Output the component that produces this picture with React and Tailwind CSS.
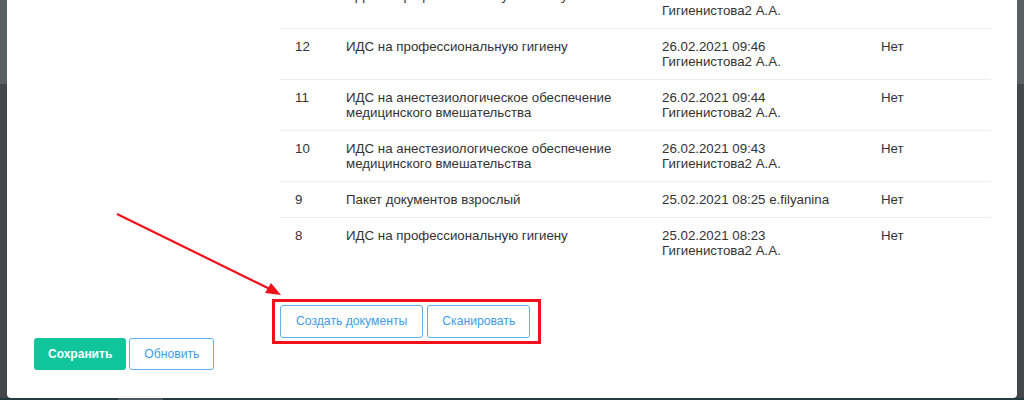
const rows = [
  { n: 13, name: 'ИДС на профессиональную гигиену', date: '26.02.2021 09:47 Гигиенистова2 А.А.', flag: 'Нет' },
  { n: 12, name: 'ИДС на профессиональную гигиену', date: '26.02.2021 09:46 Гигиенистова2 А.А.', flag: 'Нет' },
  { n: 11, name: 'ИДС на анестезиологическое обеспечение медицинского вмешательства', date: '26.02.2021 09:44 Гигиенистова2 А.А.', flag: 'Нет' },
  { n: 10, name: 'ИДС на анестезиологическое обеспечение медицинского вмешательства', date: '26.02.2021 09:43 Гигиенистова2 А.А.', flag: 'Нет' },
  { n: 9, name: 'Пакет документов взрослый', date: '25.02.2021 08:25 e.filyanina', flag: 'Нет' },
  { n: 8, name: 'ИДС на профессиональную гигиену', date: '25.02.2021 08:23 Гигиенистова2 А.А.', flag: 'Нет' },
]

function Strip() {
  return (
    <div className="flex w-[7px] flex-col">
      <div className="h-[84px] bg-[#596064]" />
      <div className="flex-1 bg-[#41474a]" />
    </div>
  )
}

export default function App() {
  return (
    <div
      className="relative flex h-[400px] w-[1024px] flex-col overflow-hidden bg-[#263a42] text-[#333]"
      style={{ fontFamily: '"Liberation Sans", Arial, sans-serif' }}
    >
      <div className="flex h-[398px]">
        <Strip />
        <div className="flex flex-1 flex-col overflow-hidden rounded-b-[4px] bg-white">
          {/* documents table, scrolled a bit */}
          <div className="-mt-[22px] pl-[273px] pr-[26px]">
            <table className="w-full table-fixed border-collapse text-[13.3px] leading-[15px]">
              <colgroup>
                <col className="w-[51px]" />
                <col className="w-[316px]" />
                <col className="w-[219px]" />
                <col />
              </colgroup>
              <tbody>
                {rows.map((r, i) => (
                  <tr key={r.n} className={i < rows.length - 1 ? 'border-b border-[#eceef5]' : ''}>
                    <td className="py-[10px] pl-[15px] align-top">{r.n}</td>
                    <td className="py-[10px] pl-[15px] pr-[15px] align-top">{r.name}</td>
                    <td className="py-[10px] pl-[15px] pr-[24px] align-top">{r.date}</td>
                    <td className="py-[10px] pl-[15px] align-top">{r.flag}</td>
                  </tr>
                ))}
              </tbody>
            </table>
          </div>

          <div className="mt-[37px] pl-[273px]">
            <div className="relative inline-flex gap-[4px]">
              <button className="h-[33px] rounded-[3px] border border-[#5db2f2] px-[15px] text-[12.2px] text-[#3d9de6]">
                Создать документы
              </button>
              <button className="h-[33px] rounded-[3px] border border-[#5db2f2] px-[14px] text-[12.2px] text-[#3d9de6]">
                Сканировать
              </button>
              <div className="pointer-events-none absolute -bottom-[6px] -left-[8px] -right-[11px] -top-[6px] border-[3px] border-[#f2111a]" />
            </div>
          </div>

          <div className="flex gap-[3px] pl-[27px]">
            <button className="h-[32px] rounded-[3px] bg-[#10c49c] px-[14px] text-[12px] font-bold text-white">
              Сохранить
            </button>
            <button className="h-[32px] rounded-[3px] border border-[#5db2f2] px-[14px] text-[12.2px] text-[#3d9de6]">
              Обновить
            </button>
          </div>
        </div>
        <Strip />
      </div>
      <div className="flex h-[2px]">
        <div className="w-[118px]" />
        <div className="w-[45px] bg-[#4b5a61]" />
      </div>

      {/* annotation arrow */}
      <svg className="pointer-events-none absolute left-0 top-0" width="1024" height="400">
        <line x1="117" y1="214" x2="272" y2="290" stroke="#f2111a" strokeWidth="2.2" />
        <polygon points="281,295 265,293 271,283" fill="#f2111a" />
      </svg>
    </div>
  )
}
